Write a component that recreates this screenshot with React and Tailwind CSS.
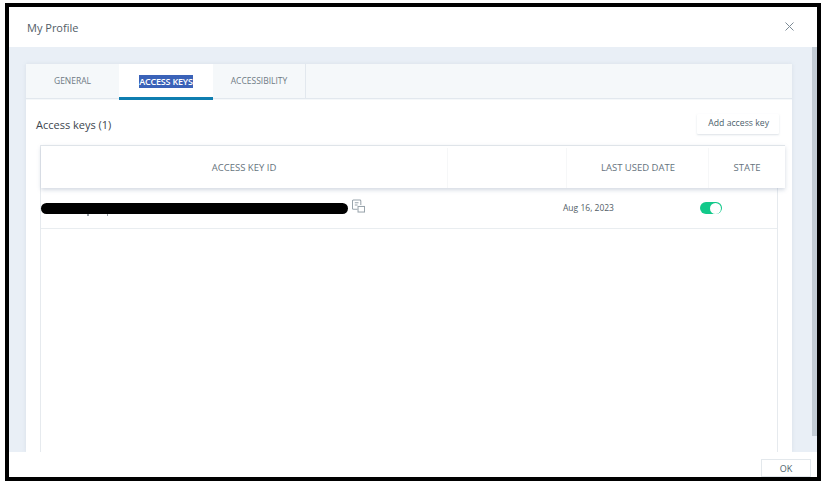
const font = { fontFamily: '"Open Sans", sans-serif' }

function CopyIcon() {
  return (
    <svg width="13" height="14" viewBox="0 0 14 14" fill="none" stroke="#98a3ab" strokeWidth="1.1" className="ml-[4px] mb-[4px]">
      <path d="M9.5 6V1.5a1 1 0 0 0-1-1h-7a1 1 0 0 0-1 1v8a1 1 0 0 0 1 1H6" />
      <path d="M3 3.5h4M3 6h3" />
      <rect x="6.5" y="7.5" width="7" height="6" fill="#fff" />
    </svg>
  )
}

function Tab({ label, active, last }) {
  if (active) {
    return (
      <div className="flex h-[36px] w-[94px] items-center justify-center border-b-[3px] border-[#0f7eb0] bg-white pt-[2px] text-[9px] font-semibold tracking-[-0.2px]">
        <span className="bg-[#3a62b8] text-white">{label}</span>
      </div>
    )
  }
  return (
    <div className={`flex h-[35px] items-center justify-center border-b border-[#e2e8ee] text-[8.5px] text-[#6f7a84] ${last ? 'w-[93px] border-r' : 'w-[93px]'}`}>
      {label}
    </div>
  )
}

export default function App() {
  return (
    <div className="h-[485px] w-[825px] bg-white pl-[5px] pt-[3px]" style={font}>
      <div className="flex h-[478px] w-[816px] flex-col border-4 border-black bg-white">
        <div className="flex h-[40px] shrink-0 items-center justify-between pl-[18px] pr-[23px]">
          <span className="mt-[2px] text-[11px] text-[#525d66]">My Profile</span>
          <svg width="9" height="9" viewBox="0 0 9 9" stroke="#7d8b96" strokeWidth="1" className="-mt-[1px]"><path d="M.5.5l8 8M8.5.5l-8 8" /></svg>
        </div>

        <div className="flex h-[405px] shrink-0 bg-[#e9eff6]">
          <div className="min-w-0 flex-1 overflow-hidden pl-[17px] pr-[20px] pt-[17px]">
            <div className="h-[388px] bg-white shadow-[0_0_4px_rgba(120,140,160,0.15)]">
              <div className="flex h-[36px] items-start bg-[#f5f8fa]">
                <Tab label="GENERAL" />
                <Tab label="ACCESS KEYS" active />
                <Tab label="ACCESSIBILITY" last />
                <div className="h-[35px] flex-1 border-b border-[#e2e8ee]" />
              </div>

              <div className="flex h-[45px] items-center justify-between pl-[10px] pr-[13px]">
                <span className="mt-[6px] text-[11px] text-[#3d464e]">Access keys (1)</span>
                <div className="mt-[3px] flex h-[20px] items-center rounded-[1px] pl-[11px] pr-[10px] text-[8.7px] text-[#4c5f6d] shadow-[0_1px_2px_rgba(120,140,160,0.25)]">Add access key</div>
              </div>

              <div className="mx-[14px] h-[307px] border-x border-[#e6eaee]">
                <div className="-mr-[8px] flex h-[43px] border-t border-[#dfe4e9] bg-white pt-[2px] text-[9.5px] text-[#66737d] shadow-[0_2px_4px_rgba(110,130,160,0.3)]">
                  <div className="flex w-[407px] items-center justify-center border-r border-[#f6f7f8]">ACCESS KEY ID</div>
                  <div className="w-[119px] border-r border-[#f6f7f8]" />
                  <div className="flex w-[142px] items-center justify-center border-r border-[#f6f7f8] pl-[1px]">LAST USED DATE</div>
                  <div className="flex flex-1 items-center justify-center">STATE</div>
                </div>
                <div className="flex h-[41px] items-center border-b border-[#e9edf0] text-[8.5px] text-[#525d66]">
                  <div className="flex w-[522px] items-center">
                    <div className="relative mt-[1px] h-[11px] w-[307px] rounded-full bg-black">
                      <span className="absolute left-[46px] top-[11px] h-[2px] w-[2px] bg-[#9aa1a7]" />
                      <span className="absolute left-[66px] top-[11px] h-[2px] w-[1px] bg-[#9aa1a7]" />
                    </div>
                    <CopyIcon />
                  </div>
                  <div className="w-[137px] pt-[1px]">Aug 16, 2023</div>
                  <div className="flex h-[12px] w-[22px] items-center justify-end rounded-full bg-[#12c98a] pr-[1px]">
                    <div className="h-[11px] w-[11px] rounded-full bg-white" />
                  </div>
                </div>
              </div>
            </div>
          </div>
          <div className="h-[389px] w-[5px] shrink-0 bg-[#c3ccd5]" />
        </div>

        <div className="flex flex-1 items-start justify-end pr-[6px] pt-[7px]">
          <div className="flex h-[18px] w-[50px] items-center justify-center border border-[#e3e8ec] pt-[1px] text-[9px] text-[#4c5f6d]">OK</div>
        </div>
      </div>
    </div>
  )
}
